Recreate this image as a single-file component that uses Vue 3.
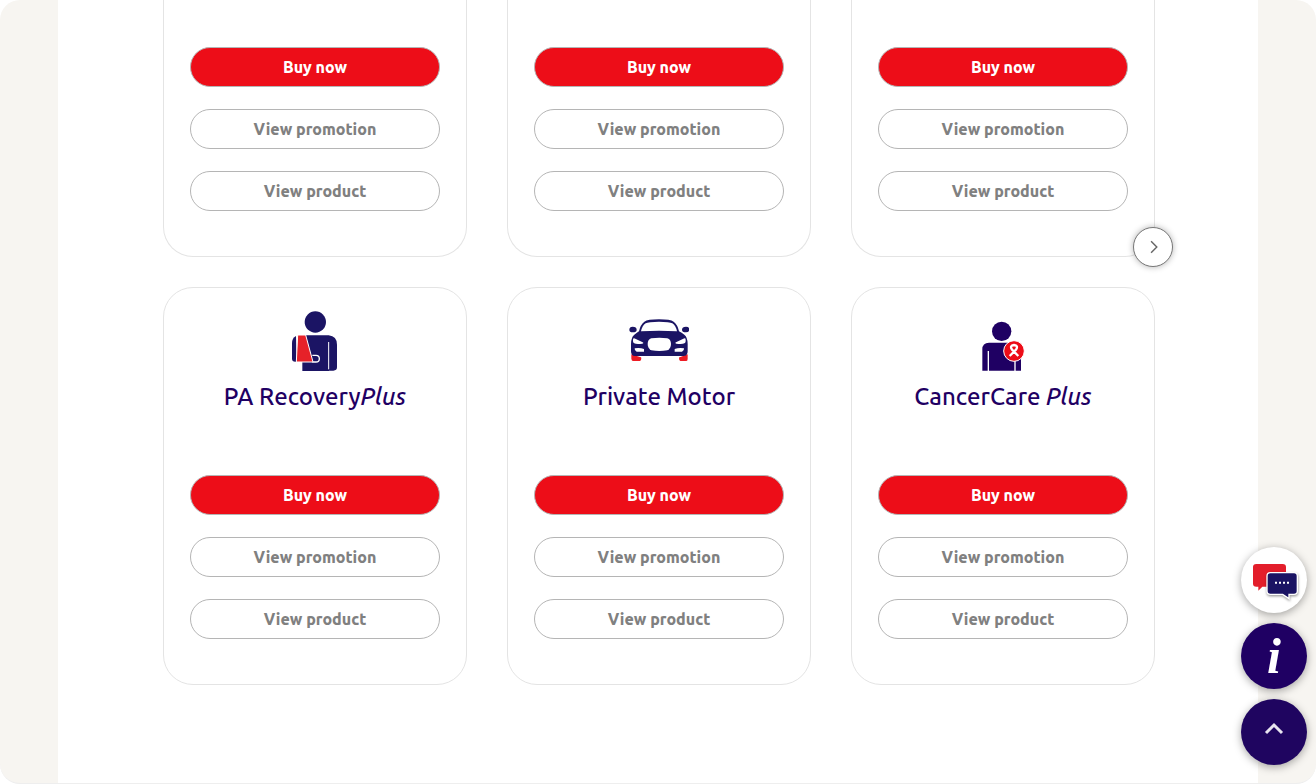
<script setup>
import { ref } from 'vue'

const products = ref([
  { id: 1 },
  { id: 2 },
  { id: 3 },
  { id: 4, name: 'PA Recovery', suffix: 'Plus', icon: 'recovery' },
  { id: 5, name: 'Private Motor', suffix: '', icon: 'motor' },
  { id: 6, name: 'CancerCare ', suffix: 'Plus', icon: 'cancer' }
])

const scrollToTop = () => {
  window.scrollTo({ top: 0, behavior: 'smooth' })
}
</script>

<template>
  <div class="page">
    <main class="content">
      <section class="products">
        <article
          v-for="product in products"
          :key="product.id"
          class="card"
          :class="{ 'card-cut': !product.name }"
        >
          <header v-if="product.name" class="card-head">
            <svg v-if="product.icon === 'recovery'" class="card-icon" viewBox="45 33 180 180" aria-hidden="true">
              <g fill="#1b1464">
                <circle cx="136" cy="66" r="32" />
                <path d="M97 213V106h79q25 3 25 28v68q0 10-11 10h-13v1z" />
                <path d="M78 108q-12 6-12 22v46q0 9 10 9h4z" />
              </g>
              <path d="M176 126v82" stroke="#fff" stroke-width="3" fill="none" />
              <path d="M127 166h11a10 10 0 0 1 0 20h-11" fill="#1b1464" stroke="#fff" stroke-width="4" />
              <path d="M83 105h24l22 81H79z" fill="#e62129" stroke="#fff" stroke-width="3" />
            </svg>
            <svg v-else-if="product.icon === 'motor'" class="card-icon" viewBox="42 33 180 180" aria-hidden="true">
              <path d="M49 163l26 8q4 0 4 3 0 9-4 9H54q-4 0-5-7zM218 163l-22 8q-4 0-4 3 0 9 4 9h18q4 0 4-7z" fill="#ed1c24" />
              <g fill="#1b1464">
                <path d="M72 94q4-20 16-29 10-7 44-7t44 7q12 9 16 29 8 4 16 10 10 8 10 28v22q0 14-12 14H60q-12 0-12-14v-22q0-20 10-28 8-6 14-10z" />
                <path d="M43 89q0-9 10-9 12 0 12 9 0 8-12 8-10 0-10-8zM201 89q0-9 12-9 10 0 10 9 0 8-10 8-12 0-12-8z" />
              </g>
              <g fill="#fff">
                <path d="M78 94q4-18 14-24 8-5 40-5t40 5q10 6 14 24-54-4-108 0z" />
                <path d="M109 115q24-4 48 0 11 4 11 17 0 13-11 19-24 4-48 0-11-6-11-19 0-13 11-17z" />
                <path d="M54 119q0-6 7-3l22 11q5 3-1 4-28 4-28-7zM212 119q0-6-7-3l-22 11q-5 3 1 4 28 4 28-7zM59 145q15-3 28 2v8H65q-7-2-6-10zM207 145q-15-3-28 2v8h22q7-2 6-10z" />
              </g>
            </svg>
            <svg v-else class="card-icon" viewBox="39 33 180 180" aria-hidden="true">
              <g fill="#1f0063">
                <circle cx="125" cy="94" r="29" />
                <path d="M67 212v-64q0-20 20-20h76q20 0 20 20v64z" />
              </g>
              <path d="M85 153v60M165 153v60" stroke="#fff" stroke-width="4" />
              <circle cx="162" cy="153" r="31" fill="#ed0d18" stroke="#fff" stroke-width="3" />
              <path d="M149 168l19-19q8-12-6-14-14 2-6 14l19 19" fill="none" stroke="#fff" stroke-width="7" stroke-linejoin="round" />
            </svg>
            <h2>{{ product.name }}<em v-if="product.suffix">{{ product.suffix }}</em></h2>
          </header>
          <div class="actions">
            <a href="#" class="btn btn-buy">Buy now</a>
            <a href="#" class="btn">View promotion</a>
            <a href="#" class="btn">View product</a>
          </div>
        </article>
        <button type="button" class="next" aria-label="Next products">
          <svg viewBox="0 0 40 40" aria-hidden="true">
            <path d="M18 14l6 6-6 6" fill="none" stroke="#666" stroke-width="1.5" />
          </svg>
        </button>
      </section>
    </main>

    <nav class="floating" aria-label="Quick links">
      <button type="button" class="round round-chat" aria-label="Chat">
        <svg viewBox="45 23 198 198" aria-hidden="true">
          <path d="M91 74h79q10 0 10 9v50q0 9-10 9h-61l-12 12v-12h-6q-10 0-10-9V83q0-9 10-9z" fill="#e31e2b" />
          <path class="bubble" d="M133 100h71q10 0 10 10v45q0 10-10 10h-15v13l-19-13h-37q-10 0-10-10v-45q0-10 10-10z" fill="#1b1464" stroke="#fff" stroke-width="4" />
          <path d="M147 127h6v6h-6zM159 127h6v6h-6zM171 127h6v6h-6zM183 127h6v6h-6z" fill="#fff" />
        </svg>
      </button>
      <button type="button" class="round round-info" aria-label="Information">i</button>
      <button type="button" class="round" aria-label="Back to top" @click="scrollToTop">
        <svg viewBox="0 0 66 66" aria-hidden="true">
          <path d="M25 34l8-8 8 8" fill="none" stroke="#e8e5ef" stroke-width="3" />
        </svg>
      </button>
    </nav>
  </div>
</template>

<style>
body {
  background: #fff;
}
</style>

<style scoped>
* {
  box-sizing: border-box;
}
.page {
  min-height: 100vh;
  display: flex;
  justify-content: center;
  background: #f7f5f1;
  border-bottom: 1px solid #eee;
  border-radius: 20px;
  overflow: hidden;
  font-family: Ubuntu, "Noto Sans", sans-serif;
}
.content {
  width: 100%;
  max-width: 1200px;
  padding: 0 103px 40px 105px;
  background: #fff;
}
.products {
  position: relative;
  display: grid;
  grid-template-columns: repeat(3, 1fr);
  gap: 30px 40px;
}
.card {
  padding: 23px 26px 45px;
  border: 1px solid #e4e4e4;
  border-radius: 30px;
}
.card-cut {
  padding-top: 47px;
  border-top: 0;
  border-radius: 0 0 30px 30px;
}
.card-head {
  display: flex;
  flex-direction: column;
  align-items: center;
  height: 164px;
}
.card-icon {
  width: 60px;
  height: 60px;
}
h2 {
  margin: 9px 0 0;
  color: #1f0063;
  font-size: 24px;
  font-weight: 500;
  line-height: 34px;
  white-space: pre;
}
.actions {
  display: flex;
  flex-direction: column;
  gap: 22px;
}
.btn {
  height: 40px;
  border: 1px solid #b5b5b5;
  border-radius: 20px;
  color: #808080;
  font-size: 16px;
  font-weight: 800;
  line-height: 38px;
  text-align: center;
  text-decoration: none;
}
.btn-buy {
  background: #ed0d18;
  color: #fff;
}
.next {
  position: absolute;
  top: 227px;
  right: -18px;
  width: 40px;
  height: 40px;
  padding: 0;
  background: #fff;
  border: 1px solid #777;
  border-radius: 50%;
  box-shadow: 0 0 6px rgba(0, 0, 0, 0.3);
  cursor: pointer;
}
.next svg {
  display: block;
  width: 100%;
}
.floating {
  position: fixed;
  right: 9px;
  bottom: 19px;
  display: flex;
  flex-direction: column;
  gap: 10px;
}
.round {
  width: 66px;
  height: 66px;
  padding: 0;
  background: #1f0560;
  border: 0;
  border-radius: 50%;
  box-shadow: 0 2px 8px rgba(0, 0, 0, 0.35);
  cursor: pointer;
}
.round svg {
  display: block;
  width: 100%;
}
.round-chat {
  background: #fff;
}
.round-info {
  background: #1f0063;
  color: #fff;
  font-family: "Liberation Serif", serif;
  font-size: 50px;
  font-style: italic;
  font-weight: 700;
  line-height: 60px;
}
.bubble {
  filter: drop-shadow(1px 4px 3px rgba(0, 0, 0, 0.4));
}
</style>
